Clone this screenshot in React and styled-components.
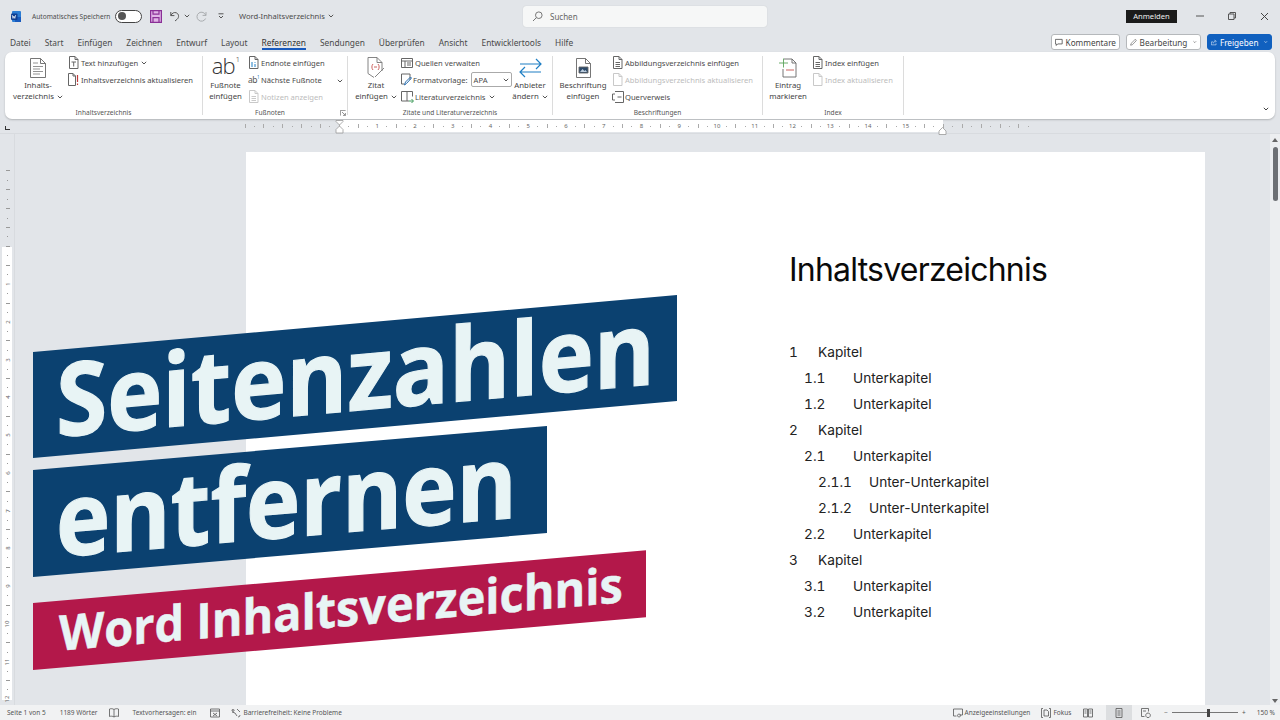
import React from "react";
import styled, { createGlobalStyle } from "styled-components";

const UI_FONT = `"Noto Sans", "Open Sans", sans-serif`;

const Global = createGlobalStyle`
  html, body { margin: 0; padding: 0; background: #e2e5e9; }
  * { box-sizing: border-box; }
`;

const Root = styled.div`
  position: relative;
  width: 1280px;
  height: 720px;
  overflow: hidden;
  display: flex;
  flex-direction: column;
  background: #e2e5e9;
  font-family: ${UI_FONT};
  color: #444;
`;

/* ---------- title bar ---------- */
const TitleBar = styled.div`
  height: 32px;
  display: flex;
  align-items: center;
  padding-left: 11px;
  font-size: 6.6px;
`;
const AutoSave = styled.span`
  margin-left: 11px;
  width: 83px;
  white-space: nowrap;
  color: #4c4c4c;
`;
const Toggle = styled.span`
  width: 27px;
  height: 13px;
  border: 1px solid #444;
  border-radius: 7px;
  background: #fff;
  display: flex;
  align-items: center;
  padding-left: 2px;
  margin-right: 8px;
  &::before {
    content: "";
    width: 8px;
    height: 8px;
    border-radius: 50%;
    background: #555;
  }
`;
const QuickIcon = styled.span`
  display: flex;
  align-items: center;
  margin-left: ${({ $ml }) => $ml || 0}px;
`;
const DocName = styled.span`
  margin-left: 15px;
  width: 86px;
  font-size: 7.6px;
  white-space: nowrap;
  color: #4a4a4a;
`;
const SearchBox = styled.div`
  margin-left: 189px;
  width: 244px;
  height: 21px;
  border-radius: 3px;
  background: #f6f7f7;
  box-shadow: 0 0 1px rgba(0, 0, 0, 0.2);
  display: flex;
  align-items: center;
  gap: 7px;
  padding-left: 9px;
  font-size: 8px;
  color: #666;
`;
const SignIn = styled.span`
  margin-left: auto;
  width: 51px;
  height: 13px;
  background: #1b1b1b;
  color: #eee;
  font-size: 7.6px;
  line-height: 13px;
  text-align: center;
`;
const WindowControls = styled.div`
  display: flex;
  align-items: center;
  gap: 24px;
  margin: 0 11px 0 19px;
`;

/* ---------- tab row ---------- */
const TabRow = styled.div`
  height: 20px;
  display: flex;
  align-items: center;
  padding: 0 8px 0 10px;
`;
const Tab = styled.span`
  position: relative;
  margin-right: ${({ $gap }) => $gap}px;
  font-size: 8.35px;
  white-space: nowrap;
  color: ${({ $active }) => ($active ? "#333" : "#4a4a4a")};
  ${({ $active }) =>
    $active &&
    `&::after {
      content: "";
      position: absolute;
      left: 0;
      right: 0;
      bottom: -2px;
      height: 1.5px;
      background: #185abd;
    }`}
`;
const Actions = styled.div`
  margin-left: auto;
  display: flex;
  gap: 6px;
`;
const ActionButton = styled.button`
  height: 16px;
  width: ${({ $w }) => $w}px;
  padding: 0 3px;
  display: flex;
  align-items: center;
  justify-content: center;
  gap: 3px;
  border-radius: 3px;
  border: 1px solid ${({ $primary }) => ($primary ? "#1060bf" : "#b5b8bb")};
  background: ${({ $primary }) => ($primary ? "#1060bf" : "#fff")};
  color: ${({ $primary }) => ($primary ? "#fff" : "#444")};
  font-family: ${UI_FONT};
  font-size: 8.2px;
  white-space: nowrap;
`;

/* ---------- ribbon ---------- */
const Ribbon = styled.div`
  position: relative;
  margin: 0 5px;
  height: 67px;
  display: flex;
  background: #fff;
  border-radius: 7px;
  box-shadow: 0 1px 2px rgba(0, 0, 0, 0.22);
`;
const Group = styled.section`
  position: relative;
  width: ${({ $w }) => $w}px;
  display: flex;
  flex-direction: column;
`;
const GroupBody = styled.div`
  height: 55px;
  padding: 3px 0 0 ${({ $pl }) => $pl || 0}px;
  display: flex;
`;
const GroupLabel = styled.div`
  height: 10px;
  font-size: 6.6px;
  line-height: 11px;
  text-align: center;
  color: #555;
  padding-right: ${({ $shift }) => $shift || 0}px;
`;
const Launcher = styled.span`
  position: absolute;
  right: 1px;
  bottom: 3px;
  display: flex;
`;
const Divider = styled.div`
  width: 1px;
  margin: 4px 0;
  background: #dcdcdc;
`;
const BigButton = styled.div`
  width: ${({ $w }) => $w}px;
  display: flex;
  flex-direction: column;
  align-items: center;
  font-size: 7.8px;
  line-height: 11px;
  text-align: center;
  white-space: nowrap;
`;
const BigIcon = styled.div`
  height: 25px;
  display: flex;
  align-items: center;
  justify-content: center;
`;
const FootnoteGlyph = styled.span`
  display: block;
  margin-top: -5px;
  font-family: "Open Sans", sans-serif;
  font-weight: 300;
  font-size: 22px;
  line-height: 20px;
  color: #333;
  letter-spacing: -1px;
  sup {
    font-size: 8px;
    line-height: 0;
    margin-left: 1px;
    vertical-align: 12px;
  }
`;
const SmallColumn = styled.div`
  margin-top: -1px;
  margin-left: ${({ $ml }) => $ml || 0}px;
  width: ${({ $w }) => $w || "auto"};
  display: flex;
  flex-direction: column;
`;
const SmallRow = styled.div`
  height: 17px;
  display: flex;
  align-items: center;
  font-size: 7.6px;
  white-space: nowrap;
  color: ${({ $disabled }) => ($disabled ? "#bcbcbc" : "#4a4a4a")};
`;
const Slot = styled.span`
  width: ${({ $w }) => $w || 13}px;
  flex: none;
  display: flex;
  align-items: center;
`;
const SmallGlyph = styled.span`
  font-size: 8.5px;
  line-height: 10px;
  letter-spacing: -0.5px;
  color: #555;
  sup {
    font-size: 4.5px;
    line-height: 0;
    color: #1f7fc4;
  }
`;
const StyleSelect = styled.span`
  margin-left: 3px;
  width: 41px;
  height: 15px;
  border: 1px solid #aaa;
  border-radius: 2px;
  padding: 0 2px;
  display: flex;
  align-items: center;
  justify-content: space-between;
`;
const Collapse = styled.span`
  position: absolute;
  right: 6px;
  bottom: 8px;
  display: flex;
`;

/* ---------- rulers ---------- */
const RulerRow = styled.div`
  height: 14px;
  margin-top: 1px;
  padding-left: 5px;
  display: flex;
  align-items: flex-start;
  border-bottom: 1px solid #d8dbdf;
`;
const TabMark = styled.span`
  flex: none;
  width: 5px;
  height: 4px;
  margin-top: 6px;
  border-left: 1.5px solid #333;
  border-bottom: 1.5px solid #333;
`;
const Ruler = styled.div`
  position: relative;
  margin-left: 230.3px;
  height: 12px;
  display: flex;
  background: linear-gradient(
    to right,
    transparent 99.7px,
    #fff 99.7px,
    #fff 703px,
    transparent 703px
  );
`;
const Cell = styled.span`
  flex: none;
  width: 9.45px;
  height: 12px;
  display: flex;
  align-items: center;
  justify-content: center;
  font-size: 6px;
  color: #666;
`;
const Tick = styled.i`
  display: block;
  width: 1px;
  height: ${({ $long }) => ($long ? 4 : 1)}px;
  background: #aaa;
`;
const IndentMark = styled.span`
  position: absolute;
  left: ${({ $x }) => $x}px;
  top: ${({ $top }) => $top}px;
  display: flex;
`;
const Main = styled.div`
  flex: 1;
  min-height: 0;
  display: flex;
`;
const SideRuler = styled.div`
  width: 15px;
  flex: none;
  padding: 13.3px 2px 0;
  overflow: hidden;
  border-right: 1px solid #d8dbdf;
`;
const SideStrip = styled.div`
  margin-top: -13.3px;
  padding-top: 13.3px;
  height: 571px;
  background: linear-gradient(to bottom, transparent 112.7px, #fff 112.7px, #fff 566px, transparent 566px);
`;
const SideCell = styled.span`
  display: flex;
  align-items: center;
  justify-content: center;
  width: 11px;
  height: 9.45px;
  font-size: 6px;
  color: #666;
  b {
    font-weight: 400;
    transform: rotate(-90deg);
  }
`;
const SideTick = styled.i`
  display: block;
  height: 1px;
  width: ${({ $long }) => ($long ? 4 : 1)}px;
  background: #999;
`;

/* ---------- document ---------- */
const Canvas = styled.div`
  flex: 1;
  min-width: 0;
  overflow: hidden;
  padding: 18px 0 0 231px;
`;
const Page = styled.article`
  width: 959px;
  height: 700px;
  background: #fff;
  padding: 96px 0 0 543px;
  font-family: Inter, "Noto Sans", sans-serif;
  color: #111;
`;
const Heading = styled.h1`
  margin: 0 0 47px;
  font-weight: 400;
  font-size: 32px;
  line-height: 44px;
  letter-spacing: -0.78px;
  color: #0a0a0a;
`;
const TocRow = styled.div`
  height: 26px;
  display: flex;
  align-items: center;
  padding-left: ${({ $indent }) => $indent}px;
  font-size: 13.7px;
  color: #222;
`;
const TocNumber = styled.span`
  width: ${({ $w }) => $w}px;
  flex: none;
  font-variant-numeric: tabular-nums;
`;
const ScrollTrack = styled.div`
  width: 10px;
  flex: none;
  position: relative;
  padding-top: 4px;
  display: flex;
  flex-direction: column;
  align-items: center;
  background: #eceef0;
`;
const ScrollThumb = styled.div`
  margin-top: 5px;
  width: 5px;
  height: 54px;
  border-radius: 3px;
  background: #6d7074;
`;
const Arrow = styled.span`
  width: 0;
  height: 0;
  border-left: 3.5px solid transparent;
  border-right: 3.5px solid transparent;
  ${({ $down }) =>
    $down
      ? `position: absolute; bottom: 2px; border-top: 4px solid #666;`
      : `border-bottom: 4px solid #666;`}
`;

/* ---------- status bar ---------- */
const StatusBar = styled.footer`
  height: 15px;
  display: flex;
  align-items: center;
  padding: 0 5px 0 7px;
  background: #f1f2f3;
  font-size: 6.5px;
  white-space: nowrap;
  color: #555;
`;
const Status = styled.span`
  display: flex;
  align-items: center;
  gap: 2px;
  margin-left: ${({ $ml }) => $ml || 0}px;
`;
const ViewButton = styled.span`
  width: 26px;
  height: 15px;
  margin-left: ${({ $ml }) => $ml || 0}px;
  display: flex;
  align-items: center;
  justify-content: center;
  background: ${({ $active }) => ($active ? "#dcdee0" : "transparent")};
`;
const ZoomTrack = styled.span`
  position: relative;
  margin: 0 4px;
  width: 66px;
  height: 1px;
  background: #777;
  &::after {
    content: "";
    position: absolute;
    left: 35px;
    top: -3.5px;
    width: 3px;
    height: 8px;
    background: #444;
  }
`;

/* ---------- thumbnail banners over the window ---------- */
const Banner = styled.div`
  position: absolute;
  left: 33px;
  top: ${({ $top }) => $top}px;
  width: ${({ $w }) => $w}px;
  height: ${({ $h }) => $h}px;
  background: ${({ $bg }) => $bg};
  transform: skewY(${({ $skew }) => $skew}deg);
  transform-origin: 0 0;
`;
const BannerText = styled.span`
  position: absolute;
  left: ${({ $left }) => $left}px;
  top: ${({ $top }) => $top}px;
  font-family: "Open Sans", sans-serif;
  font-weight: 700;
  font-size: ${({ $size }) => $size}px;
  line-height: 1;
  white-space: nowrap;
  color: #e8f4f5;
  -webkit-text-stroke: ${({ $bold }) => $bold}px #e8f4f5;
  transform: scaleX(${({ $sx }) => $sx});
  transform-origin: 0 0;
`;

/* ---------- icons ---------- */
const Svg = ({ w = 11, h = 13, stroke = "#666", children }) => (
  <svg width={w} height={h} viewBox={`0 0 ${w} ${h}`} fill="none" stroke={stroke} strokeWidth="1">
    {children}
  </svg>
);
const Chev = ({ color = "#555" }) => (
  <svg width="6" height="4" viewBox="0 0 6 4" fill="none" stroke={color} style={{ marginLeft: 3 }}>
    <path d="M.8.8 3 3l2.2-2.2" />
  </svg>
);
const SHEET = "M1.5.5h5.5l3 3v9h-8.5zM7 .5v3h3";

const WordLogo = () => (
  <svg width="10" height="11" viewBox="0 0 10 11">
    <rect x="1" width="9" height="11" rx="1" fill="#2b7cd3" />
    <rect x="4" y="6" width="6" height="5" fill="#185abd" />
    <rect y="2.5" width="6.5" height="6.5" rx="1" fill="#103f91" />
    <path d="M1.2 4l.8 3.4.9-2.4.9 2.4L4.7 4" stroke="#fff" strokeWidth=".7" fill="none" />
  </svg>
);
const SaveIcon = () => (
  <svg width="12" height="13" viewBox="0 0 12 13" fill="#e0b4e6" stroke="#8a2f96" strokeWidth="1.2">
    <path d="M.6.6h10.8v11.8H.6z" />
    <path d="M3 .6v3.6h6V.6M3 12.4V7.6h6v4.8" fill="none" />
  </svg>
);
const UndoIcon = () => (
  <svg width="11" height="11" viewBox="0 0 11 11" fill="none" stroke="#555">
    <path d="M.8 1v3.6h3.6M.9 4.5C2 2 4.300 1 6.300 1.800c2.700 1.100 3 4.500.9 6.400L5 10" />
  </svg>
);
const RedoIcon = () => (
  <svg width="11" height="11" viewBox="0 0 11 11" fill="none" stroke="#a9acaf">
    <path d="M10 1v3.400H6.600M9.800 4.400A4.500 4.500 0 1 0 9.600 7.500" />
  </svg>
);
const CustomizeIcon = () => (
  <svg width="6" height="6" viewBox="0 0 6 6" fill="none" stroke="#555">
    <path d="M.5.800h5M1 3l2 2 2-2" />
  </svg>
);
const SearchIcon = () => (
  <svg width="11" height="11" viewBox="0 0 11 11" fill="none" stroke="#777">
    <circle cx="6.800" cy="4.200" r="3.300" />
    <path d="M4.400 6.600 1 10" />
  </svg>
);
const CommentIcon = () => (
  <svg width="9" height="9" viewBox="0 0 9 9" fill="none" stroke="#444" strokeWidth=".9">
    <path d="M.5.800h8v5.400H3.200L1.500 8V6.200h-1z" />
  </svg>
);
const PenIcon = () => (
  <svg width="11" height="11" viewBox="0 0 11 11" fill="none" stroke="#444" strokeWidth=".9">
    <path d="M1 10l.7-2.800L8 1c.6-.6 1.400-.6 2 0s.6 1.400 0 2L3.800 9.300z" />
  </svg>
);
const ShareIcon = () => (
  <svg width="10" height="9" viewBox="0 0 10 9" fill="none" stroke="#fff" strokeWidth=".9">
    <path d="M3.500 3.500H.6v5h8V6M4 6c0-2.500 1.500-3.800 3.500-3.800M6 .5l3 1.700L6.800 4.500" />
  </svg>
);
const TocBig = () => (
  <svg width="16" height="20" viewBox="0 0 16 20" fill="none" stroke="#666" strokeWidth=".9">
    <path d="M.5.500h10l5 5v14H.5zM10.500.500v5h5" />
    <path d="M3 5h5M3 8.500h10M3 11h7M3 13.500h10M3 16h7" stroke="#888" />
  </svg>
);
const CiteBig = () => (
  <svg width="20" height="22" viewBox="0 0 20 22" fill="none" stroke="#777" strokeWidth=".9">
    <path d="M2 .5h9l5 5v8.500M2 .5v16l6 4M11 .5v5h5M9 20l9-9" />
    <path d="M7 7c-1.500 1.500-1.500 4.500 0 6M12 7c1.500 1.500 1.500 4.500 0 6M8 10h3" stroke="#c5534f" />
  </svg>
);
const SwapBig = () => (
  <svg width="23" height="20" viewBox="0 0 23 20" fill="none" stroke="#1f7fc4" strokeWidth="1.2">
    <path d="M1 6h21M17 1l5 5-5 5" />
    <path d="M22 14H1M6 9l-5 5 5 5" />
  </svg>
);
const CaptionBig = () => (
  <svg width="15" height="20" viewBox="0 0 15 20" fill="none" stroke="#666" strokeWidth=".9">
    <path d="M.5.500h9l5 5v14H.5zM9.500.500v5h5" />
    <path d="M3 9h9v6H3z" fill="#2c4a6a" />
    <path d="M4 14l2.500-3 2 2 1-1 1.500 2z" fill="#bcd" stroke="none" />
  </svg>
);
const MarkBig = () => (
  <svg width="18" height="20" viewBox="0 0 18 20" fill="none" stroke="#666" strokeWidth=".9">
    <path d="M5 1h8l4 4v14H4v-8M13 1v4h4" />
    <path d="M7 12h8" stroke="#c5534f" />
    <path d="M0 5h9M4.500 .5v9" stroke="#5ba55b" />
  </svg>
);
const SheetSmall = ({ stroke = "#666", children }) => (
  <Svg stroke={stroke}>
    <path d={SHEET} />
    {children}
  </Svg>
);
const AddTextIcon = () => (
  <SheetSmall>
    <path d="M3.500 6h4.500M5.700 6v4.500" />
  </SheetSmall>
);
const UpdateTocIcon = () => (
  <Svg>
    <path d="M.5.500h4.500l2.500 2.500v9.500h-7zM5 .5V3h2.500" />
    <path d="M9.500 2v7M9.500 10.500V12" stroke="#c03a3a" strokeWidth="1.200" />
  </Svg>
);
const EndnoteIcon = () => (
  <SheetSmall>
    <path d="M4 6v5M7 6v.800M7 8v3" stroke="#1f7fc4" />
  </SheetSmall>
);
const LinesIcon = ({ stroke = "#c9c9c9" }) => (
  <SheetSmall stroke={stroke}>
    <path d="M3.500 6.500h4.500M3.500 8.500h4.500M3.500 10.500h4.500" />
  </SheetSmall>
);
const SourcesIcon = () => (
  <Svg w={12} h={11}>
    <path d="M.5 1.500h11v9H.5zM.5 4h11M4 4v6.500" />
    <path d="M6 6h4M6 8h4" />
  </Svg>
);
const StyleIcon = () => (
  <Svg w={11} h={13}>
    <path d="M.5 1h8.500v6M.5 1v10h3" />
    <path d="M3.500 12l1-3 5-5 1 1-5 5.500z" stroke="#2a6fb0" />
  </Svg>
);
const BookIcon = () => (
  <Svg w={13} h={13}>
    <path d="M.5 1.500h5.500v9.500H.5zM6 1.500h5.500v5M6 11h2" />
    <path d="M8 11h4M10.500 9l2 2-2 2" stroke="#3e9a5a" />
  </Svg>
);
const CrossRefIcon = () => (
  <Svg w={12} h={12}>
    <path d="M3 .5h8.500v11H3" />
    <path d="M.5 3v6M.5 3H3M.5 9H3M5.500 6h4" />
  </Svg>
);
const LauncherIcon = () => (
  <svg width="6" height="6" viewBox="0 0 6 6" fill="none" stroke="#666" strokeWidth=".7">
    <path d="M.4 5.600V.4h5.200M2 2l3.400 3.400M5.400 3v2.400H3" />
  </svg>
);
const MiniIcon = ({ w = 10, d }) => (
  <svg width={w} height="10" viewBox={`0 0 ${w} 10`} fill="none" stroke="#555" strokeWidth=".8">
    <path d={d} />
  </svg>
);
const ICONS = {
  read: "M5 1.500C3.500.5 2 .5.500 1v7.500c1.500-.5 3-.5 4.500.5 1.500-1 3-1 4.500-.5V1C8 .5 6.500.5 5 1.500zM5 1.500V9",
  track: "M.5 1h9v8h-9zM.5 3h9M3 5l4 3M7 5L3 8",
  access: "M2 1.500a1 1 0 1 0 .1 0M1 4l3 1 2 3M6 1l3 3M7 9a2 2 0 0 0 2-2",
  display: "M.5 1h9v6h-3M.5 1v7h3M6 6a1.500 1.500 0 1 0 .1 0",
  focus: "M2 .5H.5v9H2M8 .5h1.500v9H8M3 2h3l1.500 1.500V8H3z",
  book: "M.5 1h4v8h-4zM5.500 1h4v8h-4zM1.500 3h2M1.500 5h2M6.500 3h2M6.500 5h2",
  page: "M2 .5h6v9H2zM3.500 3h3M3.500 5h3M3.500 7h3",
  web: "M.5.500h7v3M.5.500v8h3M2 3h3M7 5a2.300 2.300 0 1 0 .1 0",
};

/* ---------- data ---------- */
const TABS = ["Datei", "Start", "Einfügen", "Zeichnen", "Entwurf", "Layout", "Referenzen", "Sendungen", "Überprüfen", "Ansicht", "Entwicklertools", "Hilfe"];
const LEVELS = {
  1: { indent: 0, w: 29 },
  2: { indent: 15, w: 49 },
  3: { indent: 29, w: 51 },
};
const TOC = [
  [1, "1", "Kapitel"], [2, "1.1", "Unterkapitel"], [2, "1.2", "Unterkapitel"],
  [1, "2", "Kapitel"], [2, "2.1", "Unterkapitel"], [3, "2.1.1", "Unter-Unterkapitel"],
  [3, "2.1.2", "Unter-Unterkapitel"], [2, "2.2", "Unterkapitel"],
  [1, "3", "Kapitel"], [2, "3.1", "Unterkapitel"], [2, "3.2", "Unterkapitel"],
];

// cell 10 sits on the page margin, every 4th cell after it is a numbered cm
const rulerNumber = (i, max) => {
  const n = (i - 10) / 4;
  return n >= 1 && n <= max && Number.isInteger(n) ? n : null;
};

const TopRuler = () => (
  <Ruler>
    {Array.from({ length: 84 }, (_, i) => {
      const n = rulerNumber(i, 15);
      return <Cell key={i}>{n || <Tick $long={i % 2 === 0} />}</Cell>;
    })}
    <IndentMark $x={95} $top={0}>
      <svg width="9" height="14" viewBox="0 0 9 14" fill="#fff" stroke="#999" strokeWidth=".8">
        <path d="M1 .5h7v1L4.500 5 1 1.500zM4.500 6 8 9.500V13H1V9.500z" />
      </svg>
    </IndentMark>
    <IndentMark $x={698} $top={7}>
      <svg width="9" height="8" viewBox="0 0 9 8" fill="#fff" stroke="#999" strokeWidth=".8">
        <path d="M4.500.5 8 4v3.500H1V4z" />
      </svg>
    </IndentMark>
  </Ruler>
);

const LeftRuler = () => (
  <SideRuler>
    <SideStrip>
      {Array.from({ length: 59 }, (_, i) => {
        const n = rulerNumber(i, 12);
        return (
          <SideCell key={i}>
            {n ? <b>{n}</b> : i >= 2 && <SideTick $long={i % 2 === 0} />}
          </SideCell>
        );
      })}
    </SideStrip>
  </SideRuler>
);

export default function App() {
  return (
    <Root>
      <Global />
      <TitleBar>
        <WordLogo />
        <AutoSave>Automatisches Speichern</AutoSave>
        <Toggle />
        <SaveIcon />
        <QuickIcon $ml={8}><UndoIcon /><Chev /></QuickIcon>
        <QuickIcon $ml={6}><RedoIcon /></QuickIcon>
        <QuickIcon $ml={11}><CustomizeIcon /></QuickIcon>
        <DocName>Word-Inhaltsverzeichnis</DocName>
        <Chev />
        <SearchBox><SearchIcon />Suchen</SearchBox>
        <SignIn>Anmelden</SignIn>
        <WindowControls>
          <svg width="8" height="8" viewBox="0 0 8 8" stroke="#555"><path d="M0 4h8" /></svg>
          <svg width="8" height="8" viewBox="0 0 8 8" fill="none" stroke="#555"><path d="M.5 2h5.500v5.500H.5zM2 2V.5h5.500V6H6" /></svg>
          <svg width="9" height="9" viewBox="0 0 9 9" stroke="#444"><path d="M1 1l7 7M8 1 1 8" /></svg>
        </WindowControls>
      </TitleBar>

      <TabRow>
        {TABS.map((name, i) => (
          <Tab key={name} $gap={i < TABS.length - 1 ? 14 : 0} $active={name === "Referenzen"}>{name}</Tab>
        ))}
        <Actions>
          <ActionButton $w={69}><CommentIcon />Kommentare</ActionButton>
          <ActionButton $w={75}><PenIcon />Bearbeitung<Chev /></ActionButton>
          <ActionButton $w={65} $primary><ShareIcon />Freigeben<Chev color="#fff" /></ActionButton>
        </Actions>
      </TabRow>

      <Ribbon>
        <Group $w={197}>
          <GroupBody $pl={5}>
            <BigButton $w={56}>
              <BigIcon><TocBig /></BigIcon>
              Inhalts-<br />
              <span>verzeichnis<Chev /></span>
            </BigButton>
            <SmallColumn $ml={2}>
              <SmallRow><Slot><AddTextIcon /></Slot>Text hinzufügen<Chev /></SmallRow>
              <SmallRow><Slot><UpdateTocIcon /></Slot>Inhaltsverzeichnis aktualisieren</SmallRow>
            </SmallColumn>
          </GroupBody>
          <GroupLabel>Inhaltsverzeichnis</GroupLabel>
        </Group>
        <Divider />
        <Group $w={144}>
          <GroupBody>
            <BigButton $w={45}>
              <BigIcon><FootnoteGlyph>ab<sup>1</sup></FootnoteGlyph></BigIcon>
              Fußnote<br />einfügen
            </BigButton>
            <SmallColumn $w="95px">
              <SmallRow><Slot><EndnoteIcon /></Slot>Endnote einfügen</SmallRow>
              <SmallRow>
                <Slot><SmallGlyph>ab<sup>1</sup></SmallGlyph></Slot>Nächste Fußnote
                <span style={{ marginLeft: "auto" }}><Chev /></span>
              </SmallRow>
              <SmallRow $disabled><Slot><LinesIcon /></Slot>Notizen anzeigen</SmallRow>
            </SmallColumn>
          </GroupBody>
          <GroupLabel $shift={10}>Fußnoten</GroupLabel>
          <Launcher><LauncherIcon /></Launcher>
        </Group>
        <Divider />
        <Group $w={204}>
          <GroupBody $pl={6}>
            <BigButton $w={44}>
              <BigIcon><CiteBig /></BigIcon>
              Zitat<br />
              <span>einfügen<Chev /></span>
            </BigButton>
            <SmallColumn $ml={3} $w="111px">
              <SmallRow><Slot $w={14}><SourcesIcon /></Slot>Quellen verwalten</SmallRow>
              <SmallRow>
                <Slot $w={12}><StyleIcon /></Slot>Formatvorlage:
                <StyleSelect>APA<Chev /></StyleSelect>
              </SmallRow>
              <SmallRow><Slot $w={14}><BookIcon /></Slot>Literaturverzeichnis<Chev /></SmallRow>
            </SmallColumn>
            <BigButton $w={36}>
              <BigIcon><SwapBig /></BigIcon>
              Anbieter<br />
              <span>ändern<Chev /></span>
            </BigButton>
          </GroupBody>
          <GroupLabel>Zitate und Literaturverzeichnis</GroupLabel>
        </Group>
        <Divider />
        <Group $w={209}>
          <GroupBody $pl={6}>
            <BigButton $w={48}>
              <BigIcon><CaptionBig /></BigIcon>
              Beschriftung<br />einfügen
            </BigButton>
            <SmallColumn $ml={5}>
              <SmallRow><Slot><LinesIcon stroke="#666" /></Slot>Abbildungsverzeichnis einfügen</SmallRow>
              <SmallRow $disabled><Slot><SheetSmall stroke="#c9c9c9" /></Slot>Abbildungsverzeichnis aktualisieren</SmallRow>
              <SmallRow><Slot><CrossRefIcon /></Slot>Querverweis</SmallRow>
            </SmallColumn>
          </GroupBody>
          <GroupLabel>Beschriftungen</GroupLabel>
        </Group>
        <Divider />
        <Group $w={140}>
          <GroupBody $pl={6}>
            <BigButton $w={38}>
              <BigIcon><MarkBig /></BigIcon>
              Eintrag<br />markieren
            </BigButton>
            <SmallColumn $ml={5}>
              <SmallRow><Slot><LinesIcon stroke="#666" /></Slot>Index einfügen</SmallRow>
              <SmallRow $disabled><Slot><SheetSmall stroke="#c9c9c9" /></Slot>Index aktualisieren</SmallRow>
            </SmallColumn>
          </GroupBody>
          <GroupLabel>Index</GroupLabel>
        </Group>
        <Divider />
        <Collapse><Chev color="#444" /></Collapse>
      </Ribbon>

      <RulerRow>
        <TabMark />
        <TopRuler />
      </RulerRow>

      <Main>
        <LeftRuler />
        <Canvas>
          <Page>
            <Heading>Inhaltsverzeichnis</Heading>
            {TOC.map(([level, num, label]) => (
              <TocRow key={num} $indent={LEVELS[level].indent}>
                <TocNumber $w={LEVELS[level].w}>{num}</TocNumber>
                {label}
              </TocRow>
            ))}
          </Page>
        </Canvas>
        <ScrollTrack>
          <Arrow />
          <ScrollThumb />
          <Arrow $down />
        </ScrollTrack>
      </Main>

      <StatusBar>
        <Status>Seite 1 von 5</Status>
        <Status $ml={14}>1189 Wörter</Status>
        <Status $ml={12}><MiniIcon d={ICONS.read} /></Status>
        <Status $ml={13}>Textvorhersagen: ein</Status>
        <Status $ml={14}><MiniIcon d={ICONS.track} /></Status>
        <Status $ml={11}><MiniIcon d={ICONS.access} />Barrierefreiheit: Keine Probleme</Status>
        <Status style={{ marginLeft: "auto" }}><MiniIcon d={ICONS.display} />Anzeigeeinstellungen</Status>
        <Status $ml={11}><MiniIcon d={ICONS.focus} />Fokus</Status>
        <ViewButton $ml={4}><MiniIcon d={ICONS.book} /></ViewButton>
        <ViewButton $ml={5} $active><MiniIcon d={ICONS.page} /></ViewButton>
        <ViewButton $ml={1}><MiniIcon d={ICONS.web} /></ViewButton>
        <Status $ml={5}>−</Status>
        <ZoomTrack />
        <Status>+</Status>
        <Status $ml={11}>150 %</Status>
      </StatusBar>

      <Banner $top={352} $w={644} $h={106} $bg="#0b4170" $skew={-5.05}>
        <BannerText $left={23} $top={-2.6} $size={102} $sx={0.913} $bold={1.2}>Seitenzahlen</BannerText>
      </Banner>
      <Banner $top={470} $w={514} $h={107} $bg="#0b4170" $skew={-4.89}>
        <BannerText $left={23} $top={-0.6} $size={102} $sx={0.9} $bold={1.2}>entfernen</BannerText>
      </Banner>
      <Banner $top={603} $w={613} $h={67} $bg="#b3184a" $skew={-4.91}>
        <BannerText $left={26} $top={6.5} $size={49} $sx={0.955} $bold={0.5}>Word Inhaltsverzeichnis</BannerText>
      </Banner>
    </Root>
  );
}
